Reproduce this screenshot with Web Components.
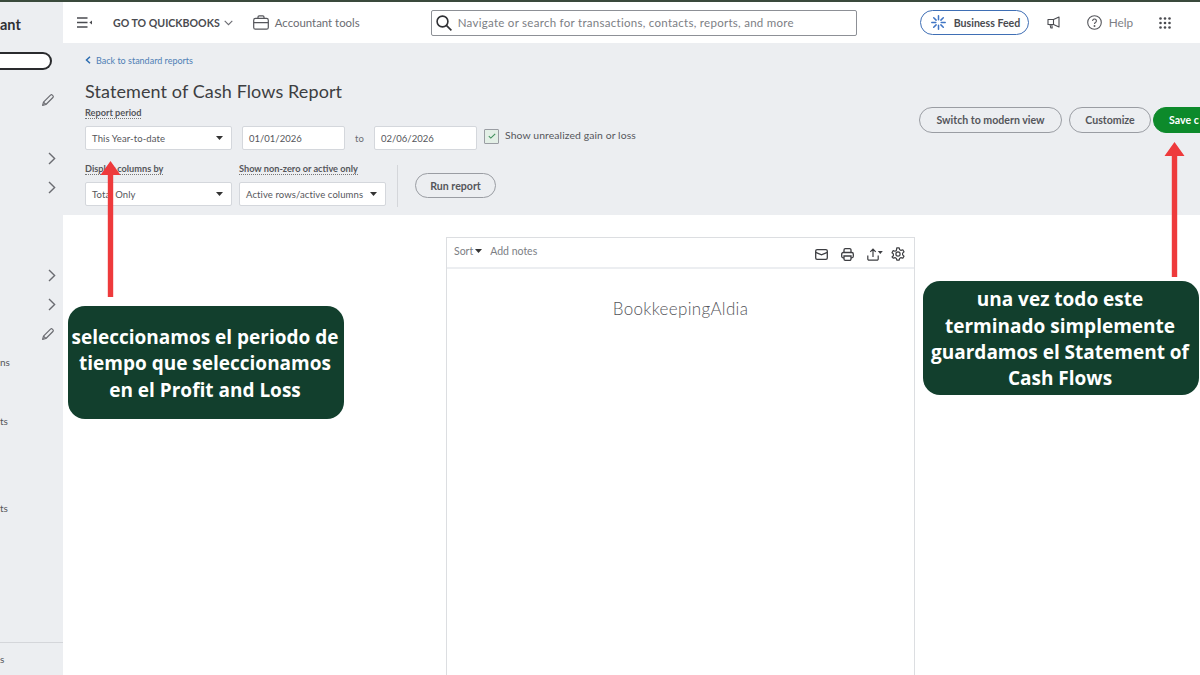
<!DOCTYPE html>
<html lang="es"><head><meta charset="utf-8"><title>Statement of Cash Flows Report</title>
<style>
html,body{margin:0;padding:0;width:1200px;height:675px;overflow:hidden;background:#fff}
body{font-family:Lato,"Open Sans",sans-serif;color:#444;position:relative}
qb-app{width:1200px;height:675px}
</style></head><body>
<qb-app>
  <qb-sidebar slot="side"></qb-sidebar>
  <qb-topbar slot="top"></qb-topbar>
  <qb-report-header slot="main"></qb-report-header>
  <qb-paper slot="main" company="BookkeepingAldia"></qb-paper>
</qb-app>
<qb-arrow style="left:100px;top:160px;width:21px;height:137px"></qb-arrow>
<qb-arrow style="left:1164px;top:141px;width:21px;height:136px"></qb-arrow>
<qb-callout style="left:68px;top:306px;width:276px;height:113px">seleccionamos el periodo de tiempo que seleccionamos en el Profit and Loss</qb-callout>
<qb-callout style="left:923px;top:281px;width:276px;height:114px">una vez todo este<br>terminado simplemente guardamos el Statement of Cash Flows</qb-callout>

<script>
const ICONS={
 pencil:'<svg width="14" height="14" viewBox="0 0 14 14" fill="none" stroke="#6b6c72" stroke-width="1.2" stroke-linejoin="round"><path d="M1.6 12.4l.9-3.3 7-7a1.3 1.3 0 0 1 1.9 0l.5.5a1.3 1.3 0 0 1 0 1.9l-7 7z"/><path d="M2.5 9.1l2.4 2.4"/></svg>',
 chev:'<svg width="8" height="13" viewBox="0 0 8 13" fill="none" stroke="#6b6c72" stroke-width="1.4"><path d="M1 1l5.6 5.5L1 12"/></svg>',
 menu:'<svg width="15" height="11" viewBox="0 0 15 11" fill="none" stroke="#4a4b50" stroke-width="1.3"><path d="M0 1h10.5M0 5.5h10.5M0 10h10.5"/><path d="M15 3.6v3.8L12.4 5.5z" fill="#4a4b50" stroke="none"/></svg>',
 down:'<svg width="9" height="6" viewBox="0 0 9 6" fill="none" stroke="#6b6c72" stroke-width="1.1"><path d="M.7.8l3.8 3.9L8.300.8"/></svg>',
 brief:'<svg width="16" height="15" viewBox="0 0 16 15" fill="none" stroke="#55565b" stroke-width="1.2"><rect x=".7" y="3.400" width="14.600" height="10.800" rx="1.800"/><path d="M5 3.400V2a1.200 1.200 0 0 1 1.200-1.200h3.600A1.200 1.200 0 0 1 11 2v1.400M.7 7.600h14.600"/></svg>',
 search:'<svg width="16" height="16" viewBox="0 0 16 16" fill="none" stroke="#2f3034" stroke-width="1.600"><circle cx="6.500" cy="6.500" r="5.400"/><path d="M10.400 10.400l5 5"/></svg>',
 burst:'<svg width="15" height="15" viewBox="0 0 15 15" fill="none" stroke="#3f74c4" stroke-width="1.500" stroke-linecap="round"><path d="M7.500.8v4M7.500 10.200v4M.8 7.500h4M10.200 7.500h4M2.700 2.700l2.400 2.400M9.900 9.900l2.400 2.400M12.300 2.700L9.900 5.100M5.100 9.900l-2.400 2.400"/></svg>',
 mega:'<svg width="13" height="13" viewBox="0 0 13 13" fill="none" stroke="#4a4b50" stroke-width="1.100" stroke-linejoin="round"><path d="M12 1v10L6.500 8.500H1V3.500H6.500z"/><path d="M6.500 3.500v5M3 8.500l.8 3.500h1.400L4.800 8.500"/></svg>',
 help:'<svg width="15" height="15" viewBox="0 0 15 15" fill="none" stroke="#55565b" stroke-width="1.100"><circle cx="7.500" cy="7.500" r="6.800"/><path d="M5.600 5.900a1.900 1.900 0 1 1 2.900 1.600c-.7.400-1 .8-1 1.500"/><circle cx="7.500" cy="11" r=".4"/></svg>',
 dots:'<svg width="12" height="12" viewBox="0 0 12 12" fill="#4a4b50"><circle cx="1.500" cy="1.500" r="1.300"/><circle cx="6" cy="1.500" r="1.300"/><circle cx="10.500" cy="1.500" r="1.300"/><circle cx="1.500" cy="6" r="1.300"/><circle cx="6" cy="6" r="1.300"/><circle cx="10.500" cy="6" r="1.300"/><circle cx="1.500" cy="10.500" r="1.300"/><circle cx="6" cy="10.500" r="1.300"/><circle cx="10.500" cy="10.500" r="1.300"/></svg>',
 back:'<svg width="6" height="8" viewBox="0 0 6 8" fill="none" stroke="#2b6cb0" stroke-width="1.500"><path d="M5 .8L1.500 4 5 7.200"/></svg>',
 caret:'<svg width="7" height="4" viewBox="0 0 7 4" fill="#333"><path d="M0 0h7L3.500 4z"/></svg>',
 check:'<svg width="8" height="6" viewBox="0 0 8 6" fill="none" stroke="#3f8f5a" stroke-width="1.100"><path d="M.8 3.200l2 1.900L7.200.8"/></svg>',
 mail:'<svg width="13" height="11" viewBox="0 0 13 11" fill="none" stroke="#3d3e42" stroke-width="1.300"><rect x=".7" y=".7" width="11.600" height="9.600" rx="1.400"/><path d="M.7 3.300l5.800 2.600 5.800-2.600"/></svg>',
 print:'<svg width="13" height="13" viewBox="0 0 13 13" fill="none" stroke="#3d3e42" stroke-width="1.300"><path d="M3 4.500V2A1.300 1.300 0 0 1 4.300.7h4.400A1.300 1.300 0 0 1 10 2v2.500"/><rect x=".7" y="4.500" width="11.600" height="5.300" rx="1.500"/><path d="M3 8v3a1.300 1.300 0 0 0 1.300 1.300h4.400A1.300 1.300 0 0 0 10 11V8z" fill="#fff"/></svg>',
 share:'<svg width="16" height="13" viewBox="0 0 16 13" fill="none" stroke="#3d3e42" stroke-width="1.200"><path d="M6 9V1.200M3.300 3.800L6 1l2.700 2.800M.8 7.500v3.400a1.200 1.200 0 0 0 1.200 1.200h8a1.200 1.200 0 0 0 1.200-1.200V7.500"/><path d="M10.800 3h5L13.300 6z" fill="#3d3e42" stroke="none"/></svg>',
 gear:'<svg width="14" height="14" viewBox="0 0 14 14" fill="none" stroke="#3d3e42" stroke-width="1.200" stroke-linejoin="round"><path d="M5.800.8h2.400l.4 1.800 1.400.8 1.800-.6 1.200 2.100-1.400 1.200v1.800l1.400 1.200-1.200 2.100-1.800-.6-1.400.8-.4 1.800H5.800l-.4-1.800-1.400-.8-1.800.6L1 9.900l1.400-1.200V6.900L1 5.700l1.200-2.100 1.800.6 1.400-.8z"/><circle cx="7" cy="7" r="2.100"/></svg>'
};
function def(name,css,html){
  customElements.define(name,class extends HTMLElement{
    connectedCallback(){
      if(this.shadowRoot)return;
      const r=this.attachShadow({mode:'open'});
      const body=typeof html==='function'?html(this):html;
      r.innerHTML='<style>'+css+'</style>'+body;
    }
  });
}
def('qb-icon',':host{display:inline-flex;align-items:center;justify-content:center;flex:none}svg{display:block}',el=>ICONS[el.getAttribute('name')]||'');

def('qb-app',`:host{display:grid;grid-template-columns:63px 1fr;grid-template-rows:2px 41px 1fr;overflow:hidden}
.line{grid-column:1/3;background:#3a4a3c}
.side{grid-row:2/4;min-width:0}.top{min-width:0}.main{min-width:0;overflow:hidden;display:flex;flex-direction:column}`,
`<div class="line"></div><div class="side"><slot name="side"></slot></div><div class="top"><slot name="top"></slot></div><div class="main"><slot name="main"></slot></div>`);

def('qb-row',`:host{display:flex;justify-content:space-between;align-items:center;font-size:10px;color:#55565b;box-sizing:border-box;padding-right:8px;line-height:1}`,`<span><slot></slot></span><slot name="icon"></slot>`);

def('qb-sidebar',`:host{display:flex;flex-direction:column;height:100%;background:#eceef1;box-sizing:border-box;padding-top:14px}
.brand{font:700 14.500px/18px Lato,sans-serif;color:#2f3034;height:18px}
.pill{width:52px;height:18px;box-sizing:border-box;border:2px solid #2a2b2e;border-left:0;border-radius:0 9px 9px 0;background:#fff;margin-top:18px}
.foot{border-top:1px solid #d4d6da;height:32px;display:flex;align-items:center;font-size:10px;color:#55565b;margin-top:auto}`,
`<div class="brand">ant</div><div class="pill"></div>
<qb-row style="height:14px;margin-top:23px"><qb-icon slot="icon" name="pencil"></qb-icon></qb-row>
<qb-row style="height:14px;margin-top:44px;padding-right:7px"><qb-icon slot="icon" name="chev"></qb-icon></qb-row>
<qb-row style="height:14px;margin-top:15px;padding-right:7px"><qb-icon slot="icon" name="chev"></qb-icon></qb-row>
<qb-row style="height:14px;margin-top:74px;padding-right:7px"><qb-icon slot="icon" name="chev"></qb-icon></qb-row>
<qb-row style="height:14px;margin-top:15px;padding-right:7px"><qb-icon slot="icon" name="chev"></qb-icon></qb-row>
<qb-row style="height:14px;margin-top:16px"><qb-icon slot="icon" name="pencil"></qb-icon></qb-row>
<qb-row style="height:10px;margin-top:16px">ns</qb-row>
<qb-row style="height:10px;margin-top:49px">ts</qb-row>
<qb-row style="height:10px;margin-top:77px">ts</qb-row>
<div class="foot">s</div>`);

def('qb-topbar',`:host{display:flex;align-items:center;height:41px;background:#fff;font-size:11px;color:#55565b;box-sizing:border-box;padding-left:14px;white-space:nowrap;overflow:hidden}
.go{font-weight:700;color:#4a4b50;margin-left:21px;font-size:10.600px}
.down{margin-left:4px}
.brief{margin-left:20px}
.tools{margin-left:6px;font-size:11.400px;color:#6b6c72}
.search{margin-left:71px;width:426px;height:26px;box-sizing:border-box;border:1px solid #8d9096;border-radius:2px;display:flex;align-items:center;padding-left:4px;gap:6px;color:#7c7e84;font-size:11.500px;letter-spacing:.28px}
.feed{margin-left:63px;width:109px;height:25px;box-sizing:border-box;border:1.500px solid #3f6fb5;border-radius:13px;display:flex;align-items:center;padding-left:10px;gap:8px;font-weight:700;font-size:10.600px;color:#4a4b50}
.mega{margin-left:18px}.help{margin-left:27px}.helpt{margin-left:7px;font-size:11.800px;color:#7c7e84}.dots{margin-left:26px}`,
`<qb-icon name="menu"></qb-icon><span class="go">GO TO QUICKBOOKS</span><qb-icon class="down" name="down"></qb-icon>
<qb-icon class="brief" name="brief"></qb-icon><span class="tools">Accountant tools</span>
<div class="search"><qb-icon name="search"></qb-icon><span>Navigate or search for transactions, contacts, reports, and more</span></div>
<div class="feed"><qb-icon name="burst"></qb-icon><span>Business Feed</span></div>
<qb-icon class="mega" name="mega"></qb-icon><qb-icon class="help" name="help"></qb-icon><span class="helpt">Help</span><qb-icon class="dots" name="dots"></qb-icon>`);

def('qb-select',`:host{display:flex;align-items:center;justify-content:space-between;box-sizing:border-box;height:24px;background:#fff;border:1px solid #d4d7dc;border-radius:2px;padding:0 8px 0 6px;font-size:9.500px;color:#55565b;white-space:nowrap;letter-spacing:.1px}`,
`<span><slot></slot></span><qb-icon name="caret"></qb-icon>`);
def('qb-input',`:host{display:flex;align-items:center;box-sizing:border-box;height:24px;background:#fff;border:1px solid #d4d7dc;border-radius:2px;padding:0 6px;font-size:9.500px;color:#55565b}`,`<slot></slot>`);
def('qb-label',`:host{display:block;font-size:9.200px;font-weight:700;color:#55565b;line-height:11px;width:max-content;border-bottom:1px dotted #777;white-space:nowrap}`,`<slot></slot>`);
def('qb-btn',`:host{display:inline-flex;align-items:center;justify-content:center;box-sizing:border-box;height:26px;border-radius:13px;border:1px solid #9a9da3;font-size:10.600px;font-weight:700;color:#55565b;white-space:nowrap;flex:none}
:host([primary]){background:#0d8a2b;border-color:#0d8a2b;color:#fff;justify-content:flex-start;padding-left:15px}`,`<slot></slot>`);

def('qb-report-header',`:host{display:flex;height:172px;background:#eceef1;box-sizing:border-box;padding-left:22px;overflow:hidden;flex:none}
.left{width:834px;flex:none}
.back{display:flex;align-items:center;gap:5px;height:12px;margin-top:11px;font-size:9px;color:#4f7fb5}
h1{margin:13px 0 4px;font-size:18px;line-height:24px;font-weight:400;color:#3d3e42;letter-spacing:.1px}
.r{display:flex;align-items:center}
.r1{margin-top:7px;height:24px}
.col{display:flex;flex-direction:column;gap:7px}
.to{margin:0 9px 0 10px;font-size:9.500px;color:#6b6c72;width:10px}
.cb{margin:0 0 4px 7px;width:15px;height:15px;box-sizing:border-box;border:1px solid #9a9da3;background:#e3efe6;display:flex;align-items:center;justify-content:center;border-radius:1px}
.cbt{margin:0 0 4px 6px;font-size:10.400px;color:#55565b;position:relative;top:-1px;letter-spacing:.1px}
.div{width:1px;height:42px;background:#d4d6da;margin:0 17px -1px 11px;align-self:flex-end}
.right{display:flex;gap:7px;height:26px;margin-top:64px;flex:none}`,
`<div class="left">
 <div class="back"><qb-icon name="back"></qb-icon><span>Back to standard reports</span></div>
 <h1>Statement of Cash Flows Report</h1>
 <qb-label>Report period</qb-label>
 <div class="r r1">
  <qb-select style="width:147px">This Year-to-date</qb-select>
  <qb-input style="width:103px;margin-left:10px">01/01/2026</qb-input>
  <span class="to">to</span>
  <qb-input style="width:103px">02/06/2026</qb-input>
  <span class="cb"><qb-icon name="check"></qb-icon></span><span class="cbt">Show unrealized gain or loss</span>
 </div>
 <div class="r" style="align-items:flex-end;margin-top:13px">
  <div class="col"><qb-label>Display columns by</qb-label><qb-select style="width:147px">Total Only</qb-select></div>
  <div class="col" style="margin-left:7px"><qb-label>Show non-zero or active only</qb-label><qb-select style="width:147px">Active rows/active columns</qb-select></div>
  <div class="div"></div>
  <qb-btn style="width:81px;height:25px;margin-bottom:8px">Run report</qb-btn>
 </div>
</div>
<div class="right">
 <qb-btn style="width:143px">Switch to modern view</qb-btn>
 <qb-btn style="width:82px">Customize</qb-btn>
 <qb-btn primary style="width:70px;margin-left:-5px">Save c</qb-btn>
</div>`);

def('qb-paper',`:host{display:block;width:469px;height:438px;box-sizing:border-box;margin:22px 0 0 383px;border:1px solid #dcdee1;border-bottom:0;background:#fff;flex:none}
.bar{height:31px;box-sizing:border-box;border-bottom:2px solid #eceef1;display:flex;align-items:flex-start;padding:0 9px 0 7px;font-size:10.500px;color:#7c7e84}
.sort{display:flex;align-items:center;gap:2px;margin-top:7px}
.notes{margin:7px 0 0 8px}
.ic{margin-left:auto;display:flex;align-items:center;margin-top:9px}
.name{text-align:center;font-size:17px;font-weight:300;color:#55565b;margin-top:30px;line-height:20px;letter-spacing:.33px}`,
el=>`<div class="bar"><span class="sort">Sort <qb-icon name="caret"></qb-icon></span><span class="notes">Add notes</span>
<div class="ic"><qb-icon name="mail"></qb-icon><qb-icon name="print" style="margin-left:13px"></qb-icon><qb-icon name="share" style="margin-left:13px"></qb-icon><qb-icon name="gear" style="margin-left:8px"></qb-icon></div></div>
<div class="name">${el.getAttribute('company')}</div>`);

def('qb-arrow',`:host{position:absolute;display:block}svg{display:block;width:100%;height:100%}`,
el=>`<svg viewBox="0 0 21 136" preserveAspectRatio="none"><path d="M10.500 1L20.500 15H13.200V136H7.800V15H.5z" fill="#ee3a3c"/></svg>`);

def('qb-callout',`:host{position:absolute;display:flex;align-items:center;justify-content:center;text-align:center;box-sizing:border-box;background:#123f2d;border-radius:17px;color:#fff;font:700 19px/26.300px "Open Sans",sans-serif;padding:2px 3px 0 1px}`,`<span><slot></slot></span>`);
</script>
</body></html>
